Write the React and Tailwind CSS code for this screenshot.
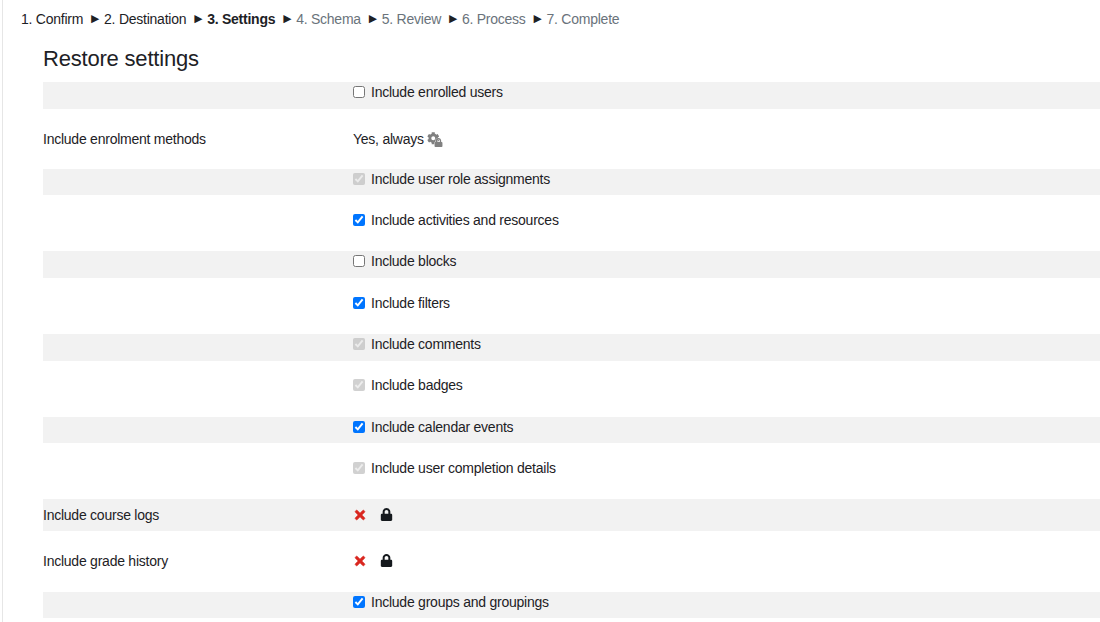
import { Fragment } from "react";
import { FaTimes, FaLock, FaCog } from "react-icons/fa";

const steps = [
  { label: "1. Confirm", tone: "text-[#1d2125]" },
  { label: "2. Destination", tone: "text-[#1d2125]" },
  { label: "3. Settings", tone: "text-[#1d2125] font-bold" },
  { label: "4. Schema", tone: "text-[#6a737b]" },
  { label: "5. Review", tone: "text-[#6a737b]" },
  { label: "6. Process", tone: "text-[#6a737b]" },
  { label: "7. Complete", tone: "text-[#6a737b]" },
];

// kind: off / on / disabled checkbox, "always" for the locked text, "locked" for x + padlock
const rows = [
  { kind: "off", text: "Include enrolled users" },
  { kind: "always", label: "Include enrolment methods" },
  { kind: "disabled", text: "Include user role assignments" },
  { kind: "on", text: "Include activities and resources" },
  { kind: "off", text: "Include blocks" },
  { kind: "on", text: "Include filters" },
  { kind: "disabled", text: "Include comments" },
  { kind: "disabled", text: "Include badges" },
  { kind: "on", text: "Include calendar events" },
  { kind: "disabled", text: "Include user completion details" },
  { kind: "locked", label: "Include course logs" },
  { kind: "locked", label: "Include grade history" },
  { kind: "on", text: "Include groups and groupings" },
];

function GearLock() {
  return (
    <span className="relative ml-[3px] inline-block h-[16px] w-[16px] text-[#808080]">
      <FaCog className="absolute left-0 top-[1.5px] h-[12.5px] w-[12.5px]" />
      <FaLock className="absolute bottom-0 right-0 h-[9px] w-[9px] stroke-white stroke-[40px]" style={{ paintOrder: "stroke" }} />
    </span>
  );
}

function Row({ row, shaded }) {
  const base = `flex text-[#1d2125] ${shaded ? "bg-[#f2f2f2]" : ""}`;
  if (row.kind === "always") {
    return (
      <div className={`${base} mb-[14.67px] h-[30.67px] items-center`}>
        <div className="w-[310px]">{row.label}</div>
        <div className="flex items-center">
          Yes, always
          <GearLock />
        </div>
      </div>
    );
  }
  if (row.kind === "locked") {
    return (
      <div className={`${base} mb-[14.3px] h-[32px] items-center`}>
        <div className="w-[310px]">{row.label}</div>
        <FaTimes className="h-[14px] w-[14px] stroke-[#d9261f] stroke-[24px] text-[#d9261f]" />
        <FaLock className="mb-[2px] ml-[13px] h-[13px] w-[13px] text-[#15191d]" />
      </div>
    );
  }
  return (
    <div className={`${base} mb-[14.67px] h-[26.67px]`}>
      <div className="w-[310px]" />
      <label className="flex h-[20px] items-center">
        <input
          type="checkbox"
          className="m-0 h-[12px] w-[12px]"
          defaultChecked={row.kind !== "off"}
          disabled={row.kind === "disabled"}
        />
        <span className="ml-[6px]">{row.text}</span>
      </label>
    </div>
  );
}

export default function App() {
  return (
    <div className="h-[622px] overflow-hidden bg-white font-['Liberation_Sans',Arial,sans-serif] text-[14px] leading-[20px] tracking-[-0.24px]">
      <div className="ml-[2px] h-full border-l border-[#e6e6e6] pl-[18px]">
        <div className="flex h-[38px] items-center">
          {steps.map((s, i) => (
            <Fragment key={s.label}>
              {i > 0 && <span className="mx-[5.43px] w-[10px] text-center text-[13.5px] text-[#1d2125]">►</span>}
              <span className={s.tone}>{s.label}</span>
            </Fragment>
          ))}
        </div>
        <div className="ml-[22px]">
          <h2 className="flex h-[44px] items-center pb-[3px] text-[22px] font-normal tracking-[-0.2px] text-[#1d2125]">Restore settings</h2>
          {rows.map((row, i) => (
            <Row key={row.label || row.text} row={row} shaded={i % 2 === 0} />
          ))}
        </div>
      </div>
    </div>
  );
}
